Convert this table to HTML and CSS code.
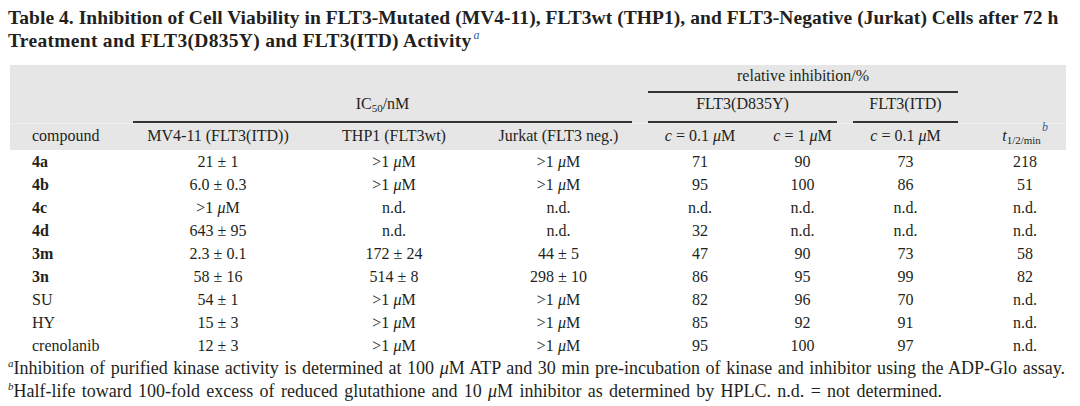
FILE: index.html
```html
<!DOCTYPE html>
<html lang="en">
<head>
<meta charset="utf-8">
<title>Table 4</title>
<link rel="stylesheet" href="styles.css">
</head>
<body>
<h1 class="title">Table 4. Inhibition of Cell Viability in FLT3-Mutated (MV4-11), FLT3wt (THP1), and FLT3-Negative (Jurkat) Cells after 72 h<br><span class="title-2">Treatment and FLT3(D835Y) and FLT3(ITD) Activity</span><sup class="ref">a</sup></h1>
<table class="data">
  <colgroup>
    <col class="c-cmp"><col class="c-mv"><col class="c-thp"><col class="c-jur"><col class="c-d1"><col class="c-d2"><col class="c-itd"><col class="c-t">
  </colgroup>
  <thead>
    <tr class="hr1">
      <th></th><th colspan="3"></th>
      <th colspan="3"><span class="rule">relative inhibition/%</span></th>
      <th></th>
    </tr>
    <tr class="hr2">
      <th></th>
      <th colspan="3"><span class="rule">IC<sub>50</sub>/nM</span></th>
      <th colspan="2"><span class="rule">FLT3(D835Y)</span></th>
      <th><span class="rule">FLT3(ITD)</span></th>
      <th></th>
    </tr>
    <tr class="hr3">
      <th class="left">compound</th>
      <th>MV4-11 (FLT3(ITD))</th>
      <th>THP1 (FLT3wt)</th>
      <th>Jurkat (FLT3 neg.)</th>
      <th><i>c</i> = 0.1 <i>μ</i>M</th>
      <th><i>c</i> = 1 <i>μ</i>M</th>
      <th><i>c</i> = 0.1 <i>μ</i>M</th>
      <th class="tcol"><i>t</i><sub>1/2/min</sub><sup class="ref">b</sup></th>
    </tr>
  </thead>
  <tbody>
    <tr><td class="left b">4a</td><td>21 ± 1</td><td>&gt;1 <i>μ</i>M</td><td>&gt;1 <i>μ</i>M</td><td>71</td><td>90</td><td>73</td><td class="tcol">218</td></tr>
    <tr><td class="left b">4b</td><td>6.0 ± 0.3</td><td>&gt;1 <i>μ</i>M</td><td>&gt;1 <i>μ</i>M</td><td>95</td><td>100</td><td>86</td><td class="tcol">51</td></tr>
    <tr><td class="left b">4c</td><td>&gt;1 <i>μ</i>M</td><td>n.d.</td><td>n.d.</td><td>n.d.</td><td>n.d.</td><td>n.d.</td><td class="tcol">n.d.</td></tr>
    <tr><td class="left b">4d</td><td>643 ± 95</td><td>n.d.</td><td>n.d.</td><td>32</td><td>n.d.</td><td>n.d.</td><td class="tcol">n.d.</td></tr>
    <tr><td class="left b">3m</td><td>2.3 ± 0.1</td><td>172 ± 24</td><td>44 ± 5</td><td>47</td><td>90</td><td>73</td><td class="tcol">58</td></tr>
    <tr><td class="left b">3n</td><td>58 ± 16</td><td>514 ± 8</td><td>298 ± 10</td><td>86</td><td>95</td><td>99</td><td class="tcol">82</td></tr>
    <tr><td class="left">SU</td><td>54 ± 1</td><td>&gt;1 <i>μ</i>M</td><td>&gt;1 <i>μ</i>M</td><td>82</td><td>96</td><td>70</td><td class="tcol">n.d.</td></tr>
    <tr><td class="left">HY</td><td>15 ± 3</td><td>&gt;1 <i>μ</i>M</td><td>&gt;1 <i>μ</i>M</td><td>85</td><td>92</td><td>91</td><td class="tcol">n.d.</td></tr>
    <tr><td class="left">crenolanib</td><td>12 ± 3</td><td>&gt;1 <i>μ</i>M</td><td>&gt;1 <i>μ</i>M</td><td>95</td><td>100</td><td>97</td><td class="tcol">n.d.</td></tr>
  </tbody>
</table>
<div class="notes">
  <p class="note note-a"><sup>a</sup>Inhibition of purified kinase activity is determined at 100 <i>μ</i>M ATP and 30 min pre-incubation of kinase and inhibitor using the ADP-Glo assay.</p>
  <p class="note note-b"><sup>b</sup>Half-life toward 100-fold excess of reduced glutathione and 10 <i>μ</i>M inhibitor as determined by HPLC. n.d. = not determined.</p>
</div>
</body>
</html>
```
FILE: styles.css
```css
body {
  margin: 0;
  padding: 6px 8px 0 8px;
  background: #ffffff;
  color: #231f20;
  font-family: "Liberation Serif", "DejaVu Serif", serif;
}

.title {
  margin: 0 0 13px 0;
  font-size: 19.5px;
  font-weight: bold;
  line-height: 23px;
  white-space: nowrap;
  letter-spacing: 0.05px;
}

.title-2 {
  letter-spacing: 0.3px;
}

.ref {
  color: #3b5ba5;
  font-style: italic;
  font-weight: normal;
  font-size: 12px;
  line-height: 0;
  vertical-align: 8px;
  margin-left: 2px;
}

.data {
  border-collapse: collapse;
  table-layout: fixed;
  width: 1056px;
  margin-left: 2px;
  font-size: 16px;
}

.c-cmp { width: 115px; }
.c-mv { width: 186px; }
.c-thp { width: 166px; }
.c-jur { width: 163px; }
.c-d1 { width: 120px; }
.c-d2 { width: 85px; }
.c-itd { width: 121px; }
.c-t { width: 100px; }

thead {
  background: #e6e6e6;
}

th {
  font-weight: normal;
  padding: 0;
  text-align: center;
  vertical-align: bottom;
  white-space: nowrap;
}

.hr1 th { height: 28px; }
.hr2 th { height: 30px; }
.hr3 th {
  height: 22px;
  line-height: 20px;
  padding-bottom: 4px;
  border-top: 1px solid #eeeeee;
}

.rule {
  display: block;
  margin: 0 8px;
  border-bottom: 2px solid #333333;
  line-height: 20px;
}

.hr1 .rule { padding-bottom: 5px; }
.hr2 .rule { padding-bottom: 7px; }

sub {
  font-size: 11px;
  line-height: 0;
  vertical-align: -3px;
}

.hr3 .ref {
  vertical-align: 10px;
  margin-left: 1px;
}

.tcol {
  padding-left: 18px;
}

td {
  padding: 0;
  height: 23px;
  line-height: 23px;
  text-align: center;
  white-space: nowrap;
}

.left {
  text-align: left;
  padding-left: 22px;
}

.b { font-weight: bold; }

.notes {
  margin-top: 0;
  font-size: 18px;
  line-height: 23px;
}

.note {
  margin: 0;
  white-space: nowrap;
}

.note-a {
  width: 1057px;
  text-align: justify;
  text-align-last: justify;
}

.note-b {
  word-spacing: 1.8px;
}

.note sup {
  font-style: italic;
  font-size: 11px;
  line-height: 0;
  vertical-align: 7px;
}
```
